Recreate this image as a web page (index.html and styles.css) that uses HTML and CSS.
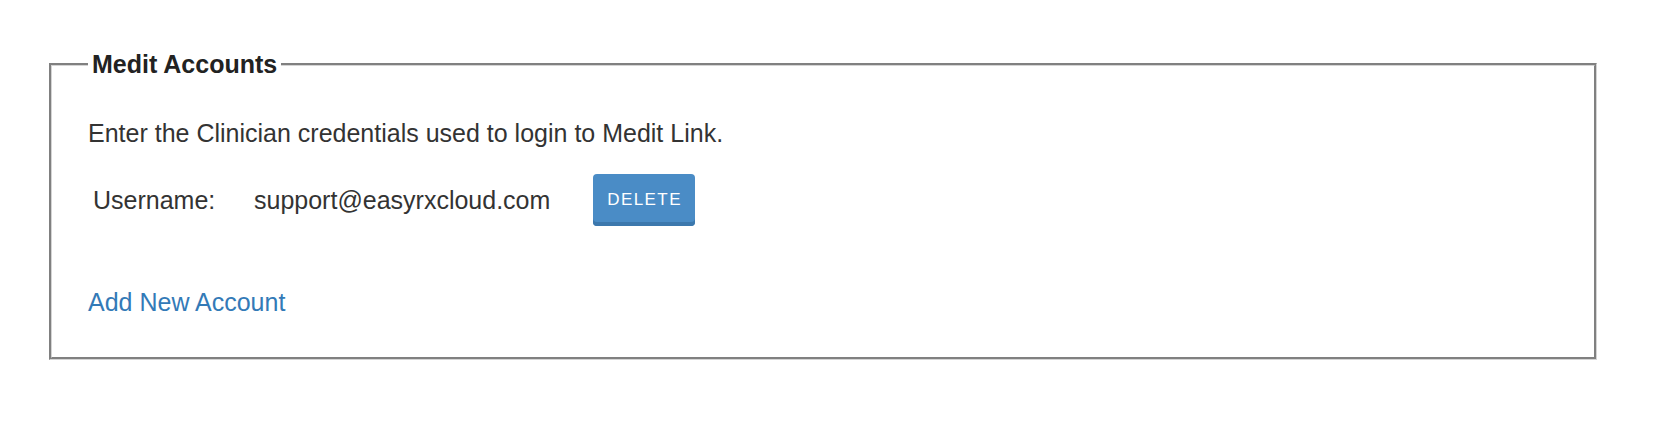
FILE: index.html
```html
<!DOCTYPE html>
<html lang="en">
<head>
    <meta charset="utf-8">
    <title>Medit Accounts</title>
    <meta name="viewport" content="width=device-width, initial-scale=1">
    <link rel="stylesheet" href="styles.css">
</head>
<body>
    <div class="page">
        <fieldset class="ma">
            <legend>Medit Accounts</legend>
            <p class="intro">Enter the Clinician credentials used to login to Medit Link.</p>

            <div class="acc">
                <span class="lbl">Username:</span>
                <span class="usr">support@easyrxcloud.com</span>
                <button class="del" type="button">Delete</button>
            </div>

            <a class="add" href="#">Add New Account</a>
        </fieldset>
    </div>
</body>
</html>
```

FILE: styles.css
```css
/* Colores base */
:root {
    --t: #333333; /* Texto */
    --l: #337ab7; /* Enlace */
    --b: #4a8cc6; /* Botón */
}

html, body {
    margin: 0;
    padding: 0;
    background: #ffffff;
    font-family: "Liberation Sans", Arial, sans-serif;
    color: var(--t);
}

.page {
    padding: 50px 59px 0 49px;
}

/* Cuadro de cuentas */
.ma {
    margin: 0;
    padding: 41px 36px 41px 36px;
    border: 3px groove #d4d4d4;
    font-size: 25px;
    line-height: 28px;
}

.ma legend {
    padding: 0 4px;
    font-weight: bold;
    color: #222222;
}

.intro {
    margin: 0;
}

.acc {
    display: flex;
    align-items: center;
    margin-top: 27px;
    padding-left: 5px;
}

.lbl {
    width: 161px;
}

.usr {
    margin-right: 43px;
}

.del {
    height: 52px;
    padding: 0 13px 0 14px;
    border: none;
    border-radius: 4px;
    background: var(--b);
    box-shadow: inset 0 -4px 0 #3c78ad;
    color: #ffffff;
    font-family: "Liberation Sans", Arial, sans-serif;
    font-size: 17px;
    font-weight: 500;
    letter-spacing: 1.4px;
    text-transform: uppercase;
    cursor: pointer;
}

.add {
    display: block;
    margin-top: 62px;
    color: var(--l);
    text-decoration: none;
    width: max-content;
}
```
